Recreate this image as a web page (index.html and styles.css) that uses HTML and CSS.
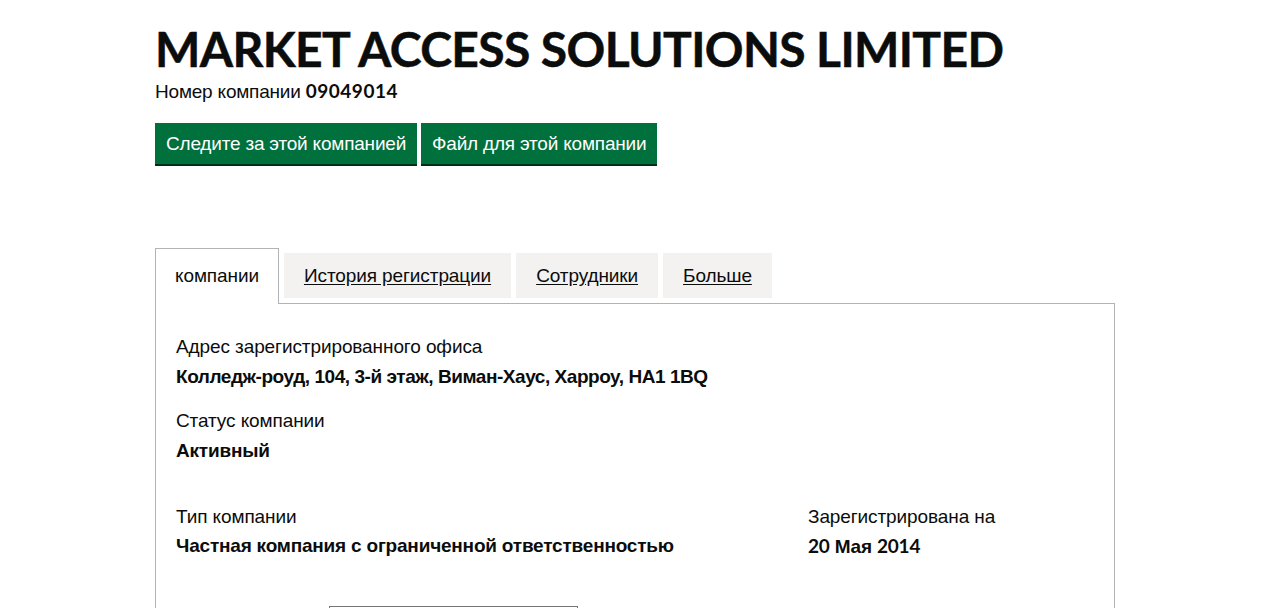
FILE: index.html
```html
<!DOCTYPE html>
<html lang="ru">
<head>
<meta charset="utf-8">
<title>MARKET ACCESS SOLUTIONS LIMITED</title>
<link rel="stylesheet" href="styles.css">
</head>
<body>
<main class="page">
  <h1 class="company-name">MARKET ACCESS SOLUTIONS LIMITED</h1>
  <p class="company-number">Номер компании <strong class="latin">09049014</strong></p>
  <div class="actions">
    <a class="button" href="#">Следите за этой компанией</a>
    <a class="button" href="#">Файл для этой компании</a>
  </div>

  <div class="tabs">
    <ul class="tab-list">
      <li class="tab tab-selected"><a href="#">компании</a></li>
      <li class="tab"><a href="#">История регистрации</a></li>
      <li class="tab"><a href="#">Сотрудники</a></li>
      <li class="tab"><a href="#">Больше</a></li>
    </ul>
    <section class="panel">
      <dl class="field">
        <dt>Адрес зарегистрированного офиса</dt>
        <dd class="address">Колледж-роуд, 104, 3-й этаж, Виман-Хаус, Харроу, HA1 1BQ</dd>
      </dl>
      <dl class="field">
        <dt>Статус компании</dt>
        <dd>Активный</dd>
      </dl>
      <div class="row">
        <dl class="field">
          <dt>Тип компании</dt>
          <dd>Частная компания с ограниченной ответственностью</dd>
        </dl>
        <dl class="field">
          <dt>Зарегистрирована на</dt>
          <dd><span class="latin">20</span> Мая <span class="latin">2014</span></dd>
        </dl>
      </div>
      <div class="more">
        <div class="more-box"></div>
      </div>
    </section>
  </div>
</main>
</body>
</html>
```

FILE: styles.css
```css
html, body {
  margin: 0;
  padding: 0;
  background: #ffffff;
  color: #0b0c0c;
  font-family: "Liberation Sans", Arial, sans-serif;
}

.page {
  width: 960px;
  margin-left: 155px;
  padding-top: 24px;
}

.latin {
  font-family: "Lato", "Liberation Sans", sans-serif;
}

.company-name {
  margin: 0;
  font-family: "Lato", "Liberation Sans", sans-serif;
  font-weight: 700;
  font-size: 48px;
  line-height: 50px;
  letter-spacing: -0.62px;
  -webkit-text-stroke: 0.5px #0b0c0c;
}

.company-number {
  margin: 4px 0 0;
  font-size: 19px;
  line-height: 25px;
  letter-spacing: -0.2px;
}

.company-number strong {
  font-weight: 700;
  letter-spacing: 0.5px;
}

.actions {
  display: flex;
  gap: 4px;
  margin-top: 19px;
}

.button {
  display: block;
  background: #00703c;
  color: #ffffff;
  text-decoration: none;
  font-size: 19px;
  line-height: 25px;
  letter-spacing: -0.2px;
  padding: 8px 11px 8px;
  box-shadow: 0 2px 0 #002d18;
}

.tabs {
  margin-top: 84px;
}

.tab-list {
  list-style: none;
  margin: 0;
  padding: 0;
  display: flex;
  align-items: flex-start;
}

.tab {
  margin-right: 5px;
  margin-top: 5px;
  background: #f3f2f1;
  padding: 10px 20px;
}

.tab a {
  color: #0b0c0c;
  font-size: 19px;
  line-height: 25px;
  letter-spacing: -0.1px;
  text-decoration: underline;
  text-underline-offset: 2px;
}

.tab-selected {
  margin-top: 0;
  background: #ffffff;
  border: 1px solid #b1b4b6;
  border-bottom: 0;
  padding: 14px 19px 16px;
  margin-bottom: -1px;
  position: relative;
}

.tab-selected a {
  text-decoration: none;
}

.panel {
  border: 1px solid #b1b4b6;
  border-bottom: 0;
  padding: 30px 20px 0;
  height: 400px;
}

.field {
  margin: 0 0 19px;
}

.field dt {
  font-size: 19px;
  line-height: 25px;
  letter-spacing: -0.1px;
}

.field dd {
  margin: 5px 0 0;
  font-size: 19px;
  line-height: 25px;
  font-weight: 700;
  letter-spacing: -0.2px;
}

.field dd.address {
  letter-spacing: -0.45px;
}

.row {
  display: grid;
  grid-template-columns: 602px 1fr;
  column-gap: 30px;
  margin-top: 41px;
}

.row .field dd {
  margin-top: 4px;
}

.more {
  margin-top: 28px;
  padding-left: 153px;
}

.more-box {
  width: 247px;
  height: 40px;
  border: 1px solid #757575;
}
```
